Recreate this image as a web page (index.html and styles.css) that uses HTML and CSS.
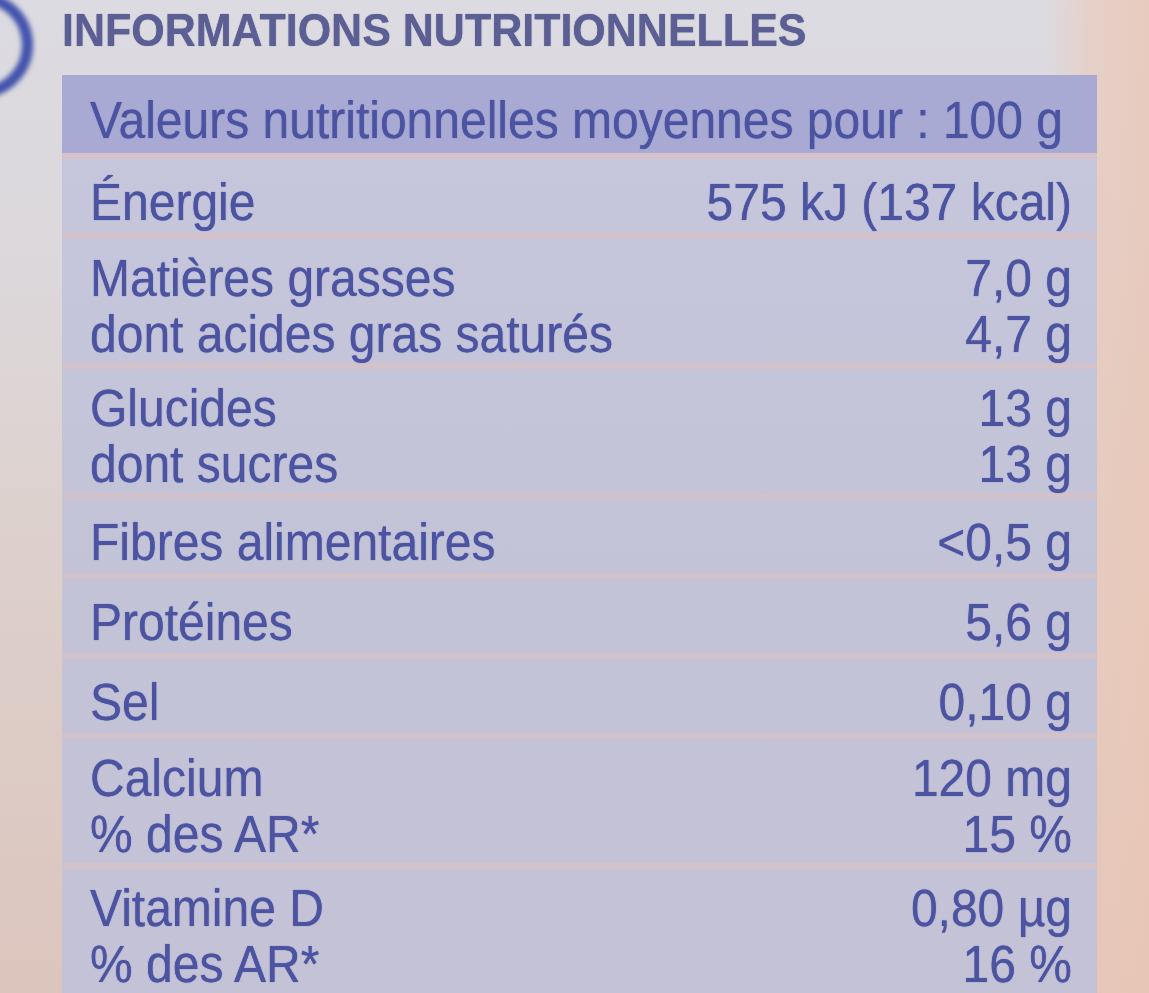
FILE: index.html
```html
<!DOCTYPE html>
<html lang="fr">
<head>
<meta charset="utf-8">
<title>Informations nutritionnelles</title>
<link rel="stylesheet" href="styles.css">
</head>
<body>
<div class="ring"></div>
<main class="label">
  <h1 class="title"><span>INFORMATIONS NUTRITIONNELLES</span></h1>
  <div class="table">
    <div class="row head"><div class="labs"><span>Valeurs nutritionnelles moyennes pour : 100 g</span></div></div>
    <div class="row"><div class="labs"><span>Énergie</span></div><div class="vals"><span>575 kJ (137 kcal)</span></div></div>
    <div class="row double"><div class="labs"><span>Matières grasses</span><span>dont acides gras saturés</span></div><div class="vals"><span>7,0 g</span><span>4,7 g</span></div></div>
    <div class="row double"><div class="labs"><span>Glucides</span><span>dont sucres</span></div><div class="vals"><span>13 g</span><span>13 g</span></div></div>
    <div class="row"><div class="labs"><span>Fibres alimentaires</span></div><div class="vals"><span>&lt;0,5 g</span></div></div>
    <div class="row"><div class="labs"><span>Protéines</span></div><div class="vals"><span>5,6 g</span></div></div>
    <div class="row"><div class="labs"><span>Sel</span></div><div class="vals"><span>0,10 g</span></div></div>
    <div class="row double"><div class="labs"><span>Calcium</span><span>% des AR*</span></div><div class="vals"><span>120 mg</span><span>15 %</span></div></div>
    <div class="row double"><div class="labs"><span>Vitamine D</span><span>% des AR*</span></div><div class="vals"><span>0,80 µg</span><span>16 %</span></div></div>
  </div>
</main>
</body>
</html>
```

FILE: styles.css
```css
html, body {
  margin: 0;
  padding: 0;
}
body {
  width: 1149px;
  height: 993px;
  overflow: hidden;
  position: relative;
  font-family: "Liberation Sans", Arial, sans-serif;
  background:
    linear-gradient(90deg, rgba(0,0,0,0) 0%, rgba(0,0,0,0) 91%, rgba(236,200,182,0.6) 95%, rgba(236,198,180,0.75) 100%),
    linear-gradient(180deg, #dcdbe1 0%, #dcd8dc 25%, #ddd0cc 55%, #dcc5bd 100%);
}
.ring {
  position: absolute;
  left: -73px;
  top: -8px;
  width: 84px;
  height: 84px;
  border: 11px solid #4253ad;
  border-radius: 50%;
  filter: blur(2.5px);
}
.label {
  padding: 6px 0 0 62px;
  filter: blur(0.6px);
}
.title {
  margin: 0;
  font-size: 43px;
  line-height: 48px;
  font-weight: 700;
  color: #5b5f93;
  text-shadow: 0 0 1px #5b5f93;
}
.title span {
  display: inline-block;
  transform: scaleY(1.08);
}
.table {
  margin-top: 21px;
  width: 1035px;
  background: linear-gradient(180deg, #c6c7dc 0%, #c3c3d8 60%, #c4c2d6 100%);
}
.row {
  display: flex;
  justify-content: space-between;
  border-top: 6px solid #d3c2c9;
  padding: 17px 25px 3px 28px;
  font-size: 48px;
  line-height: 54px;
  color: #4c54a1;
  text-shadow: 0 0 1px #4c54a1;
}
.row.double {
  padding-top: 12px;
  padding-bottom: 0;
  line-height: 56px;
}
.row.head {
  border-top: 0;
  background: #a8aad4;
  padding-top: 19px;
  padding-bottom: 5px;
}
.labs, .vals {
  display: flex;
  flex-direction: column;
}
.labs span, .vals span {
  transform: scaleY(1.08);
}
.vals {
  align-items: flex-end;
  text-align: right;
}
```
